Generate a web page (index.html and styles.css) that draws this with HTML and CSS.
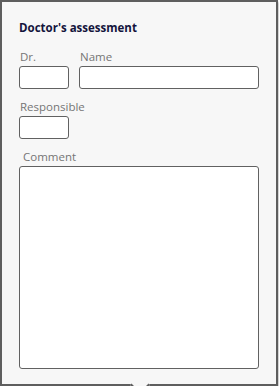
FILE: index.html
```
<!DOCTYPE html>
<html lang="en">
<head>
    <meta charset="UTF-8">
    <title>Doctor's assessment</title>
    <link rel="stylesheet" href="styles.css">
</head>
<body>
    <div class="popup">
        <div class="popup-title">Doctor's assessment</div>
        <div class="row">
            <label class="field field-short">
                <span class="field-label">Dr.</span>
                <input class="field-input" type="text">
            </label>
            <label class="field field-wide">
                <span class="field-label">Name</span>
                <input class="field-input" type="text">
            </label>
        </div>
        <div class="row">
            <label class="field field-short">
                <span class="field-label">Responsible</span>
                <input class="field-input" type="text">
            </label>
        </div>
        <label class="field field-comment">
            <span class="field-label comment-label">Comment</span>
            <textarea class="field-input comment-box"></textarea>
        </label>
    </div>
</body>
</html>
```
FILE: styles.css
```
body {
    margin: 0;
    background: #ffffff;
    font-family: "Open Sans", Arial, sans-serif;
}
.popup {
    position: relative;
    box-sizing: border-box;
    width: 278px;
    height: 386px;
    padding: 18px 17px 0 17px;
    background: #f7f7f7;
    border: 2px solid #5e5e5e;
    box-shadow: 1px 2px 2px rgba(0, 0, 0, 0.25);
}
.popup::after {
    content: '';
    position: absolute;
    left: 131px;
    bottom: -8px;
    width: 12px;
    height: 12px;
    background: #f7f7f7;
    border-right: 2px solid #5e5e5e;
    border-bottom: 2px solid #5e5e5e;
    transform: rotate(45deg);
}
.popup-title {
    font-size: 11.5px;
    font-weight: bold;
    color: #14143c;
    line-height: 16px;
    margin-bottom: 14px;
}
.row {
    display: flex;
    gap: 10px;
    margin-bottom: 11px;
}
.field {
    display: flex;
    flex-direction: column;
}
.field-short {
    width: 50px;
}
.field-wide {
    flex: 1;
}
.field-label {
    font-size: 11.5px;
    color: #757575;
    line-height: 14px;
    margin-left: 1px;
    margin-bottom: 2px;
    white-space: nowrap;
}
.field-input {
    box-sizing: border-box;
    height: 23px;
    width: 100%;
    margin: 0;
    padding: 2px 4px;
    background: #ffffff;
    border: 1px solid #616161;
    border-radius: 3px;
    font-family: inherit;
    font-size: 12px;
    outline: none;
}
.comment-label {
    margin-left: 4px;
}
.comment-box {
    height: 203px;
    resize: none;
}
```
